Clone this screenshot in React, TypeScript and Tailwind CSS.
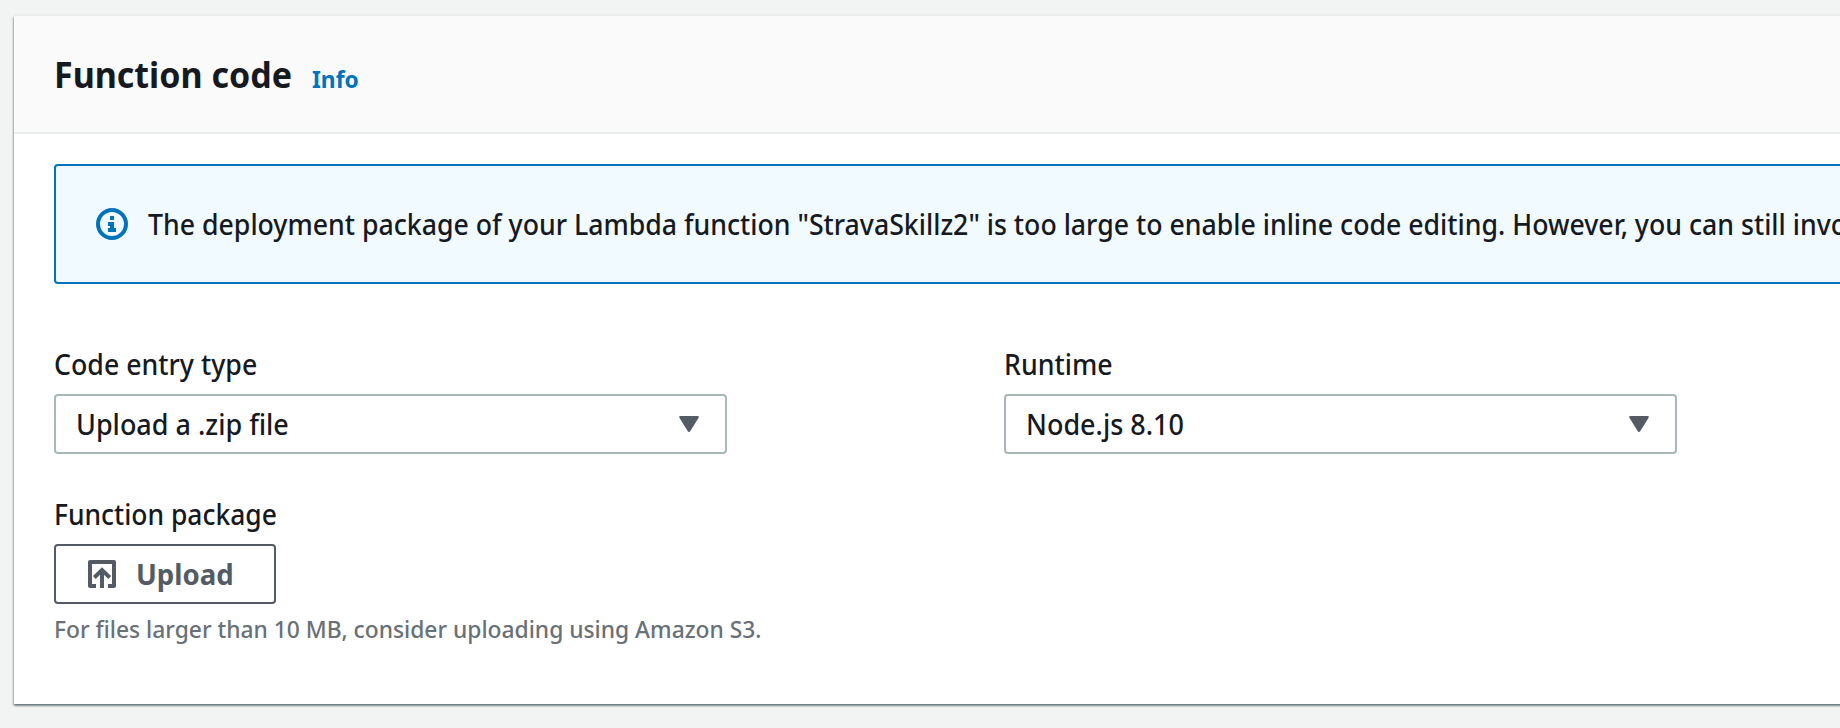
function InfoIcon() {
  return (
    <svg className="size-8 shrink-0" viewBox="0 0 32 32" fill="#0073bb">
      <circle cx="16" cy="16" r="14" fill="none" stroke="#0073bb" strokeWidth="4" />
      <path d="M14 8h4v4h-4zM12 14h6v6h2v4h-8v-4h2v-2h-2z" />
    </svg>
  );
}

function UploadIcon() {
  return (
    <svg className="size-7 shrink-0" viewBox="0 0 28 28" fill="none" stroke="#545b64" strokeWidth="4">
      <path d="M8 26H2V2h24v24h-6" strokeLinejoin="round" />
      <path d="M14 28V11M6.3 17.5 14 10l7.7 7.5" />
    </svg>
  );
}

function Select({ label, value }: { label: string; value: string }) {
  return (
    <div className="w-[673px] shrink-0">
      <div className="mb-2.5 h-10 origin-left scale-x-[0.955] text-[28px] leading-[40px] font-medium whitespace-nowrap">
        {label}
      </div>
      <div className="flex h-[60px] items-center justify-between rounded-[4px] border-2 border-[#aab7b8] bg-white pr-[25.5px] pl-5">
        <span className="origin-left scale-x-[0.963] text-[28px] leading-[40px] font-medium whitespace-nowrap">
          {value}
        </span>
        <svg className="h-[18px] w-[22px]" viewBox="0 0 22 18" fill="#545b64">
          <path d="M2.2 1h17.6c1 0 1.4.9.8 1.700L12.200 16.200c-.6.900-1.800.900-2.400 0L1.400 2.700C.8 1.900 1.200 1 2.200 1z" />
        </svg>
      </div>
    </div>
  );
}

export default function App() {
  return (
    <main className="h-[728px] overflow-hidden bg-[#f2f3f3] pt-4 pl-[14px] font-['Noto_Sans',sans-serif] text-[#16191f]">
      <section className="h-[688px] w-[1900px] bg-white shadow-[0_-2px_0_0_#eaeded,0_2px_2px_0_rgba(0,28,36,0.4),1px_1px_2px_0_rgba(0,28,36,0.2),-1px_1px_2px_0_rgba(0,28,36,0.2)]">
        <header className="flex h-[118px] items-baseline border-b-2 border-[#eaeded] bg-[#fafafa] pt-[35px] pl-10">
          <h2 className="w-[258px] shrink-0 origin-left scale-x-[0.944] text-[36px] leading-[48px] font-bold whitespace-nowrap">
            Function code
          </h2>
          <a className="origin-left scale-x-[0.95] text-[24px] leading-[48px] font-bold text-[#0073bb]">Info</a>
        </header>

        <div className="pt-[30px] pl-10">
          <div className="flex h-[120px] items-center rounded-[4px] border-2 border-[#0073bb] bg-[#f1faff] pl-10">
            <InfoIcon />
            <p className="ml-5 origin-left scale-x-[0.953] text-[28px] leading-[40px] font-medium whitespace-nowrap">
              The deployment package of your Lambda function "StravaSkillz2" is too large to enable inline code
              editing. However, you can still invoke your function.
            </p>
          </div>

          <div className="mt-[60px] flex gap-[277px]">
            <Select label="Code entry type" value="Upload a .zip file" />
            <Select label="Runtime" value="Node.js 8.10" />
          </div>

          <div className="mt-10">
            <div className="mb-2.5 h-10 origin-left scale-x-[0.944] text-[28px] leading-[40px] font-medium whitespace-nowrap">
              Function package
            </div>
            <button className="flex h-[60px] w-[222px] items-center rounded-[4px] border-2 border-[#545b64] bg-white pl-8 text-[#545b64]">
              <UploadIcon />
              <span className="ml-5 origin-left scale-x-[0.985] text-[28px] leading-[40px] font-bold">Upload</span>
            </button>
            <p className="mt-[9px] origin-left scale-x-[0.95] text-[24px] leading-[32px] font-medium whitespace-nowrap text-[#687078]">
              For files larger than 10 MB, consider uploading using Amazon S3.
            </p>
          </div>
        </div>
      </section>
    </main>
  );
}
